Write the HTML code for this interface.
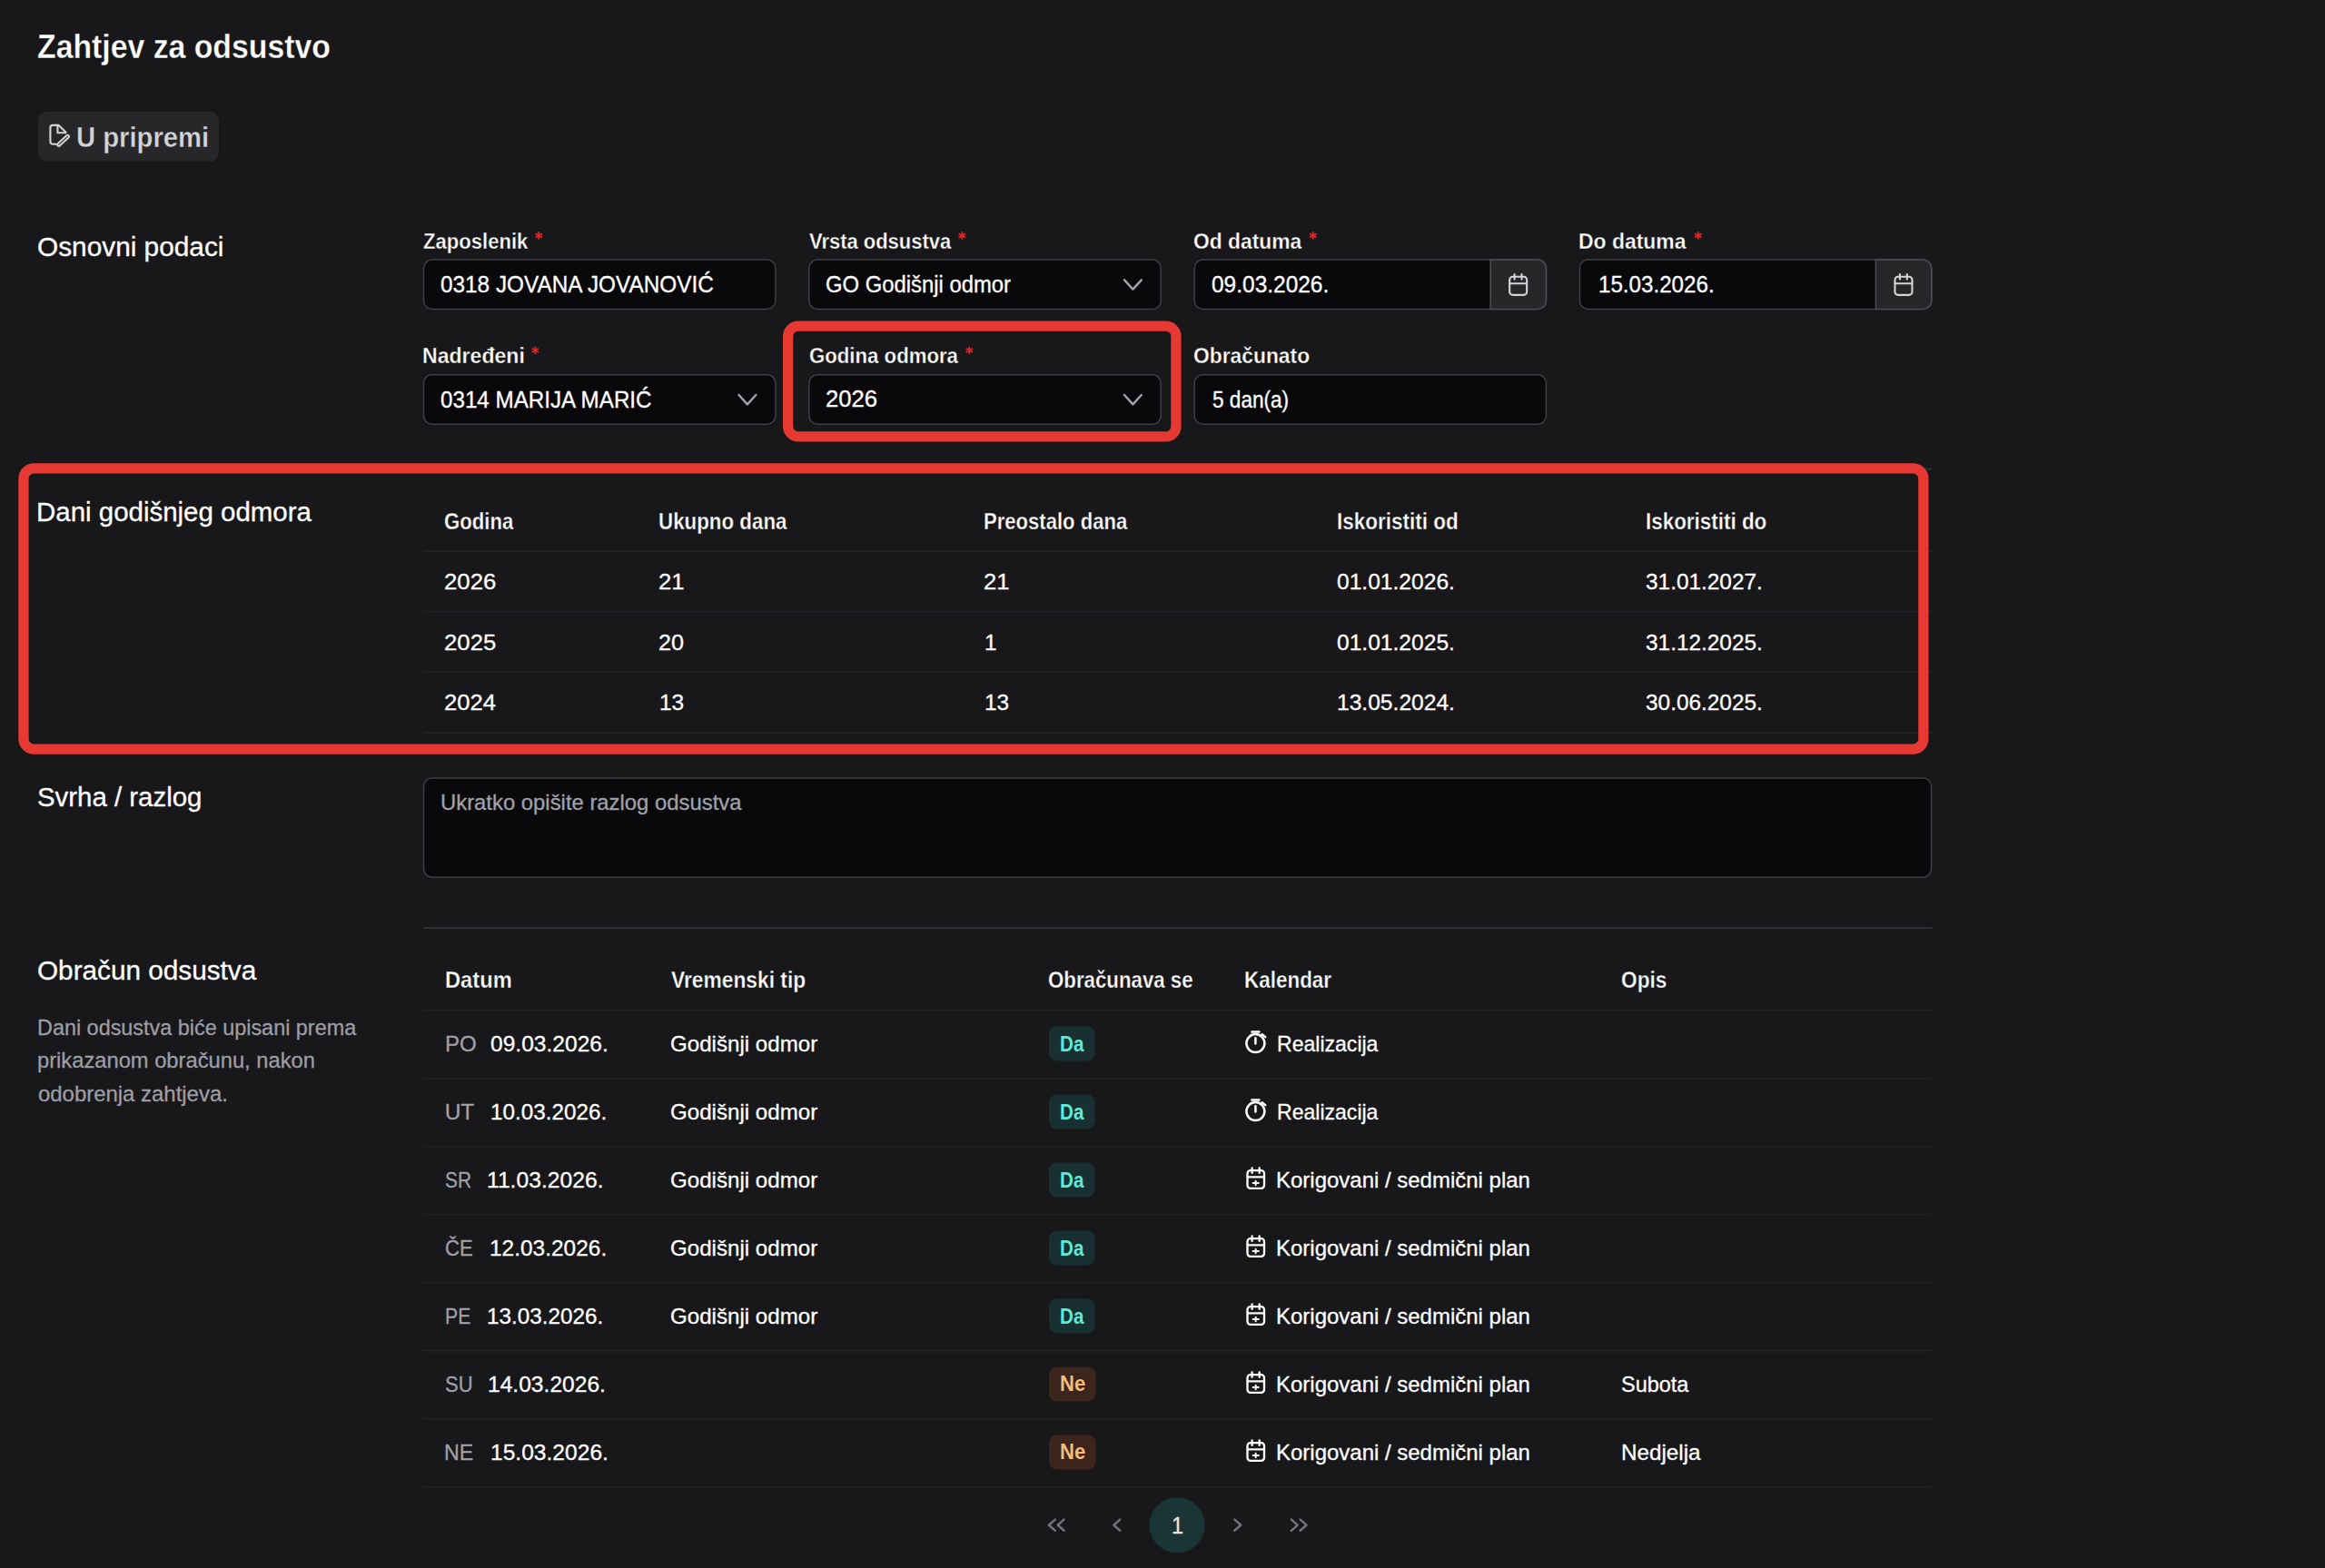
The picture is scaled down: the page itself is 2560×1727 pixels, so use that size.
<!DOCTYPE html>
<html lang="hr"><head><meta charset="utf-8"><title>Zahtjev za odsustvo</title>
<style>
html,body{margin:0;padding:0}
body{width:2560px;height:1727px;background:#18181b;overflow:hidden;position:relative;font-family:"Liberation Sans",sans-serif;color:#fff}
.shapes{position:absolute;left:0;top:0}
.t{position:absolute;white-space:nowrap;line-height:1;color:#fff;transform-origin:0 50%}
</style></head>
<body>
<svg class="shapes" width="2560" height="1727" viewBox="0 0 2560 1727"><rect x="466" y="515.50" width="1661.3" height="2" fill="#2e2e33"/>
<rect x="466" y="1021.00" width="1661.3" height="2" fill="#2e2e33"/>
<rect x="466" y="606.00" width="1661.3" height="2" fill="#222225"/>
<rect x="466" y="672.67" width="1661.3" height="2" fill="#222225"/>
<rect x="466" y="739.33" width="1661.3" height="2" fill="#222225"/>
<rect x="466" y="806.00" width="1661.3" height="2" fill="#222225"/>
<rect x="466" y="1111.60" width="1661.3" height="2" fill="#222225"/>
<rect x="466" y="1186.60" width="1661.3" height="2" fill="#222225"/>
<rect x="466" y="1261.60" width="1661.3" height="2" fill="#222225"/>
<rect x="466" y="1336.60" width="1661.3" height="2" fill="#222225"/>
<rect x="466" y="1411.60" width="1661.3" height="2" fill="#222225"/>
<rect x="466" y="1486.60" width="1661.3" height="2" fill="#222225"/>
<rect x="466" y="1561.60" width="1661.3" height="2" fill="#222225"/>
<rect x="466" y="1636.60" width="1661.3" height="2" fill="#222225"/>
<rect x="41.80" y="123.00" width="199.20" height="54.70" rx="10.00" fill="#27272a"/>
<g fill="none" stroke="#d4d4d8" stroke-width="2.1" stroke-linecap="round" stroke-linejoin="round"><path d="M61.8 158.8H58.4a3 3 0 0 1-3-3V140.9a3 3 0 0 1 3-3h6.2l7.7 7.7"/><path d="M63.4 138.6v7.6h9"/><rect x="-1.55" y="-1.55" width="16.3" height="3.1" rx="1.55" transform="translate(64.7,159.3) rotate(-42.4)"/></g>
<rect x="466.55" y="285.95" width="387.30" height="54.50" rx="9.25" fill="#09090b" stroke="#3f3f46" stroke-width="1.5"/>
<rect x="890.85" y="285.95" width="387.30" height="54.50" rx="9.25" fill="#09090b" stroke="#3f3f46" stroke-width="1.5"/>
<rect x="1315.15" y="285.95" width="387.30" height="54.50" rx="9.25" fill="#09090b" stroke="#3f3f46" stroke-width="1.5"/>
<rect x="1739.45" y="285.95" width="387.30" height="54.50" rx="9.25" fill="#09090b" stroke="#3f3f46" stroke-width="1.5"/>
<rect x="466.55" y="412.65" width="387.30" height="54.50" rx="9.25" fill="#09090b" stroke="#3f3f46" stroke-width="1.5"/>
<rect x="890.85" y="412.65" width="387.30" height="54.50" rx="9.25" fill="#09090b" stroke="#3f3f46" stroke-width="1.5"/>
<rect x="1315.15" y="412.65" width="387.30" height="54.50" rx="9.25" fill="#09090b" stroke="#3f3f46" stroke-width="1.5"/>
<path d="M1641.10 285.95H1693.20A9.25 9.25 0 0 1 1702.45 295.20V331.20A9.25 9.25 0 0 1 1693.20 340.45H1641.10Z" fill="#27272a" stroke="#4d4d56" stroke-width="1.5"/>
<g transform="translate(0.0,0)" fill="none" stroke="#d4d4d8" stroke-width="2.1" stroke-linecap="round" stroke-linejoin="round"><rect x="1662.15" y="304.75" width="19" height="20.1" rx="3.4"/><path d="M1667.6 302v5.6M1675.5 302v5.6M1662.3 312.2h18.7"/></g>
<path d="M2065.40 285.95H2117.50A9.25 9.25 0 0 1 2126.75 295.20V331.20A9.25 9.25 0 0 1 2117.50 340.45H2065.40Z" fill="#27272a" stroke="#4d4d56" stroke-width="1.5"/>
<g transform="translate(424.3,0)" fill="none" stroke="#d4d4d8" stroke-width="2.1" stroke-linecap="round" stroke-linejoin="round"><rect x="1662.15" y="304.75" width="19" height="20.1" rx="3.4"/><path d="M1667.6 302v5.6M1675.5 302v5.6M1662.3 312.2h18.7"/></g>
<path d="M1238.0 308.3l9.4 10.3 9.4-10.3" fill="none" stroke="#a1a1aa" stroke-width="2.5" stroke-linecap="round" stroke-linejoin="round"/>
<path d="M813.5 435.0l9.4 10.3 9.4-10.3" fill="none" stroke="#a1a1aa" stroke-width="2.5" stroke-linecap="round" stroke-linejoin="round"/>
<path d="M1238.0 435.0l9.4 10.3 9.4-10.3" fill="none" stroke="#a1a1aa" stroke-width="2.5" stroke-linecap="round" stroke-linejoin="round"/>
<rect x="466.55" y="857.05" width="1660.00" height="109.10" rx="9.25" fill="#09090b" stroke="#3f3f46" stroke-width="1.5"/>
<rect x="1155.00" y="1130.60" width="50.60" height="37.80" rx="8.50" fill="#183031"/>
<g transform="translate(1369,1134.0)" fill="none" stroke="#fff" stroke-width="2.5" stroke-linecap="round"><circle cx="13.4" cy="15.1" r="10"/><path d="M13.4 9.2v6.2M9.4 2.6h8M20.6 5.2l3.6 2.9"/></g>
<rect x="1155.00" y="1205.60" width="50.60" height="37.80" rx="8.50" fill="#183031"/>
<g transform="translate(1369,1209.0)" fill="none" stroke="#fff" stroke-width="2.5" stroke-linecap="round"><circle cx="13.4" cy="15.1" r="10"/><path d="M13.4 9.2v6.2M9.4 2.6h8M20.6 5.2l3.6 2.9"/></g>
<rect x="1155.00" y="1280.60" width="50.60" height="37.80" rx="8.50" fill="#183031"/>
<g transform="translate(0,1300.0)" fill="none" stroke="#fff" stroke-width="2.3" stroke-linecap="round" stroke-linejoin="round"><rect x="1373.5" y="-10.85" width="18.5" height="19.7" rx="3.3"/><path d="M1378.6 -13.7v5.6M1386.7 -13.7v5.6M1373.7 -3.7h18.1"/><path stroke-width="2" d="M1379.6 3h6.2M1382.65 0.65v4.7"/></g>
<rect x="1155.00" y="1355.60" width="50.60" height="37.80" rx="8.50" fill="#183031"/>
<g transform="translate(0,1375.0)" fill="none" stroke="#fff" stroke-width="2.3" stroke-linecap="round" stroke-linejoin="round"><rect x="1373.5" y="-10.85" width="18.5" height="19.7" rx="3.3"/><path d="M1378.6 -13.7v5.6M1386.7 -13.7v5.6M1373.7 -3.7h18.1"/><path stroke-width="2" d="M1379.6 3h6.2M1382.65 0.65v4.7"/></g>
<rect x="1155.00" y="1430.60" width="50.60" height="37.80" rx="8.50" fill="#183031"/>
<g transform="translate(0,1450.0)" fill="none" stroke="#fff" stroke-width="2.3" stroke-linecap="round" stroke-linejoin="round"><rect x="1373.5" y="-10.85" width="18.5" height="19.7" rx="3.3"/><path d="M1378.6 -13.7v5.6M1386.7 -13.7v5.6M1373.7 -3.7h18.1"/><path stroke-width="2" d="M1379.6 3h6.2M1382.65 0.65v4.7"/></g>
<rect x="1155.00" y="1505.60" width="51.50" height="37.80" rx="8.50" fill="#3c251b"/>
<g transform="translate(0,1525.0)" fill="none" stroke="#fff" stroke-width="2.3" stroke-linecap="round" stroke-linejoin="round"><rect x="1373.5" y="-10.85" width="18.5" height="19.7" rx="3.3"/><path d="M1378.6 -13.7v5.6M1386.7 -13.7v5.6M1373.7 -3.7h18.1"/><path stroke-width="2" d="M1379.6 3h6.2M1382.65 0.65v4.7"/></g>
<rect x="1155.00" y="1580.60" width="51.50" height="37.80" rx="8.50" fill="#3c251b"/>
<g transform="translate(0,1600.0)" fill="none" stroke="#fff" stroke-width="2.3" stroke-linecap="round" stroke-linejoin="round"><rect x="1373.5" y="-10.85" width="18.5" height="19.7" rx="3.3"/><path d="M1378.6 -13.7v5.6M1386.7 -13.7v5.6M1373.7 -3.7h18.1"/><path stroke-width="2" d="M1379.6 3h6.2M1382.65 0.65v4.7"/></g>
<circle cx="1296.1" cy="1679.7" r="30.5" fill="#1b3537"/>
<g transform="translate(1163.2,1679.7)" fill="none" stroke="#71717a" stroke-width="2.5" stroke-linecap="round" stroke-linejoin="round"><path transform="translate(-4.9)" d="M3.45 -6.1L-3.45 0l6.9 6.1"/><path transform="translate(4.9)" d="M3.45 -6.1L-3.45 0l6.9 6.1"/></g>
<g transform="translate(1229.8,1679.7)" fill="none" stroke="#71717a" stroke-width="2.5" stroke-linecap="round" stroke-linejoin="round"><path d="M3.45 -6.1L-3.45 0l6.9 6.1"/></g>
<g transform="translate(1362.8,1679.7)" fill="none" stroke="#71717a" stroke-width="2.5" stroke-linecap="round" stroke-linejoin="round"><path d="M-3.45 -6.1L3.45 0l-6.9 6.1"/></g>
<g transform="translate(1430.2,1679.7)" fill="none" stroke="#71717a" stroke-width="2.5" stroke-linecap="round" stroke-linejoin="round"><path transform="translate(-4.9)" d="M-3.45 -6.1L3.45 0l-6.9 6.1"/><path transform="translate(4.9)" d="M-3.45 -6.1L3.45 0l-6.9 6.1"/></g>
<path transform="translate(593.3,259.5)" d="M0 -4.2V4.2M-3.7 -2.1L3.7 2.1M-3.7 2.1L3.7 -2.1" stroke="#dc2626" stroke-width="1.8" fill="none"/>
<path transform="translate(1059.3,259.5)" d="M0 -4.2V4.2M-3.7 -2.1L3.7 2.1M-3.7 2.1L3.7 -2.1" stroke="#dc2626" stroke-width="1.8" fill="none"/>
<path transform="translate(1445.7,259.5)" d="M0 -4.2V4.2M-3.7 -2.1L3.7 2.1M-3.7 2.1L3.7 -2.1" stroke="#dc2626" stroke-width="1.8" fill="none"/>
<path transform="translate(1869.7,259.5)" d="M0 -4.2V4.2M-3.7 -2.1L3.7 2.1M-3.7 2.1L3.7 -2.1" stroke="#dc2626" stroke-width="1.8" fill="none"/>
<path transform="translate(589.3,385.9)" d="M0 -4.2V4.2M-3.7 -2.1L3.7 2.1M-3.7 2.1L3.7 -2.1" stroke="#dc2626" stroke-width="1.8" fill="none"/>
<path transform="translate(1067.3,385.9)" d="M0 -4.2V4.2M-3.7 -2.1L3.7 2.1M-3.7 2.1L3.7 -2.1" stroke="#dc2626" stroke-width="1.8" fill="none"/>
<rect x="867.65" y="359.05" width="427.30" height="121.90" rx="11.35" fill="none" stroke="#e53931" stroke-width="11.3"/>
<rect x="25.95" y="515.95" width="2091.90" height="309.10" rx="11.35" fill="none" stroke="#e53931" stroke-width="11.3"/></svg>
<span class="t" id="title" style="left:41.02px;top:33.54px;font-size:36.5px;font-weight:700;-webkit-text-stroke:.35px #18181b;transform:scaleX(0.9255);">Zahtjev za odsustvo</span>
<span class="t" id="badge" style="left:83.70px;top:135.77px;font-size:31.5px;font-weight:700;-webkit-text-stroke:.35px #27272a;color:#d4d4d8;transform:scaleX(0.9280);">U pripremi</span>
<span class="t" id="s1" style="left:41.02px;top:257.37px;font-size:29.8px;-webkit-text-stroke:.3px;">Osnovni podaci</span>
<span class="t" id="s2" style="left:40.21px;top:549.27px;font-size:29.8px;-webkit-text-stroke:.3px;transform:scaleX(0.9886);">Dani godišnjeg odmora</span>
<span class="t" id="s3" style="left:41.07px;top:863.20px;font-size:29.8px;-webkit-text-stroke:.3px;transform:scaleX(0.9866);">Svrha / razlog</span>
<span class="t" id="s4" style="left:41.21px;top:1054.27px;font-size:29.8px;-webkit-text-stroke:.3px;transform:scaleX(0.9976);">Obračun odsustva</span>
<span class="t" id="d1" style="left:41.00px;top:1119.69px;font-size:24.5px;-webkit-text-stroke:.3px;color:#9e9ea5;transform:scaleX(0.9550);">Dani odsustva biće upisani prema</span>
<span class="t" id="d2" style="left:41.00px;top:1155.66px;font-size:24.5px;-webkit-text-stroke:.3px;color:#9e9ea5;transform:scaleX(0.9680);">prikazanom obračunu, nakon</span>
<span class="t" id="d3" style="left:41.75px;top:1192.80px;font-size:24.5px;-webkit-text-stroke:.3px;color:#9e9ea5;transform:scaleX(0.9766);">odobrenja zahtjeva.</span>
<span class="t" id="l1" style="left:465.85px;top:253.70px;font-size:24.5px;font-weight:700;-webkit-text-stroke:.35px #18181b;transform:scaleX(0.9016);">Zaposlenik</span>
<span class="t" id="l2" style="left:891.05px;top:253.70px;font-size:24.5px;font-weight:700;-webkit-text-stroke:.35px #18181b;transform:scaleX(0.8960);">Vrsta odsustva</span>
<span class="t" id="l3" style="left:1313.96px;top:253.70px;font-size:24.5px;font-weight:700;-webkit-text-stroke:.35px #18181b;transform:scaleX(0.9317);">Od datuma</span>
<span class="t" id="l4" style="left:1738.37px;top:253.70px;font-size:24.5px;font-weight:700;-webkit-text-stroke:.35px #18181b;transform:scaleX(0.9357);">Do datuma</span>
<span class="t" id="l5" style="left:465.34px;top:380.28px;font-size:24.5px;font-weight:700;-webkit-text-stroke:.35px #18181b;transform:scaleX(0.9414);">Nadređeni</span>
<span class="t" id="l6" style="left:890.61px;top:380.28px;font-size:24.5px;font-weight:700;-webkit-text-stroke:.35px #18181b;transform:scaleX(0.9055);">Godina odmora</span>
<span class="t" id="l7" style="left:1313.96px;top:380.28px;font-size:24.5px;font-weight:700;-webkit-text-stroke:.35px #18181b;transform:scaleX(0.9318);">Obračunato</span>
<span class="t" id="i1" style="left:484.96px;top:300.83px;font-size:25px;-webkit-text-stroke:.3px;transform:scaleX(0.9737);">0318 JOVANA JOVANOVIĆ</span>
<span class="t" id="i2" style="left:909.16px;top:300.83px;font-size:25px;-webkit-text-stroke:.3px;transform:scaleX(0.9531);">GO Godišnji odmor</span>
<span class="t" id="i3" style="left:1333.92px;top:300.83px;font-size:25px;-webkit-text-stroke:.3px;transform:scaleX(0.9789);">09.03.2026.</span>
<span class="t" id="i4" style="left:1759.50px;top:300.83px;font-size:25px;-webkit-text-stroke:.3px;transform:scaleX(0.9661);">15.03.2026.</span>
<span class="t" id="i5" style="left:484.96px;top:427.57px;font-size:25px;-webkit-text-stroke:.3px;transform:scaleX(0.9675);">0314 MARIJA MARIĆ</span>
<span class="t" id="i6" style="left:908.86px;top:427.16px;font-size:25px;-webkit-text-stroke:.3px;transform:scaleX(1.0266);">2026</span>
<span class="t" id="i7" style="left:1334.68px;top:427.76px;font-size:25px;-webkit-text-stroke:.3px;transform:scaleX(0.9031);">5 dan(a)</span>
<span class="t" id="ph" style="left:484.90px;top:872.16px;font-size:24.5px;-webkit-text-stroke:.3px;color:#a1a1aa;transform:scaleX(0.9737);">Ukratko opišite razlog odsustva</span>
<span class="t" id="h1" style="left:489.03px;top:561.95px;font-size:25.5px;font-weight:700;-webkit-text-stroke:.35px #18181b;transform:scaleX(0.8693);">Godina</span>
<span class="t" id="h2" style="left:725.04px;top:561.95px;font-size:25.5px;font-weight:700;-webkit-text-stroke:.35px #18181b;transform:scaleX(0.8758);">Ukupno dana</span>
<span class="t" id="h3" style="left:1083.17px;top:561.95px;font-size:25.5px;font-weight:700;-webkit-text-stroke:.35px #18181b;transform:scaleX(0.8656);">Preostalo dana</span>
<span class="t" id="h4" style="left:1471.97px;top:561.95px;font-size:25.5px;font-weight:700;-webkit-text-stroke:.35px #18181b;transform:scaleX(0.8820);">Iskoristiti od</span>
<span class="t" id="h5" style="left:1811.97px;top:561.95px;font-size:25.5px;font-weight:700;-webkit-text-stroke:.35px #18181b;transform:scaleX(0.8794);">Iskoristiti do</span>
<span class="t" id="a01" style="left:489.29px;top:628.56px;font-size:24.5px;-webkit-text-stroke:.3px;transform:scaleX(1.0514);">2026</span>
<span class="t" id="a02" style="left:725.49px;top:628.56px;font-size:24.5px;-webkit-text-stroke:.3px;transform:scaleX(1.0510);">21</span>
<span class="t" id="a03" style="left:1083.29px;top:628.56px;font-size:24.5px;-webkit-text-stroke:.3px;transform:scaleX(1.0437);">21</span>
<span class="t" id="a04" style="left:1471.97px;top:628.56px;font-size:24.5px;-webkit-text-stroke:.3px;transform:scaleX(1.0037);">01.01.2026.</span>
<span class="t" id="a05" style="left:1812.28px;top:628.56px;font-size:24.5px;-webkit-text-stroke:.3px;transform:scaleX(0.9954);">31.01.2027.</span>
<span class="t" id="a11" style="left:489.29px;top:695.63px;font-size:24.5px;-webkit-text-stroke:.3px;transform:scaleX(1.0510);">2025</span>
<span class="t" id="a12" style="left:725.49px;top:695.63px;font-size:24.5px;-webkit-text-stroke:.3px;transform:scaleX(1.0283);">20</span>
<span class="t" id="a13" style="left:1083.89px;top:695.63px;font-size:24.5px;-webkit-text-stroke:.3px;transform:scaleX(0.9910);">1</span>
<span class="t" id="a14" style="left:1471.97px;top:695.68px;font-size:24.5px;-webkit-text-stroke:.3px;transform:scaleX(1.0037);">01.01.2025.</span>
<span class="t" id="a15" style="left:1812.28px;top:695.64px;font-size:24.5px;-webkit-text-stroke:.3px;transform:scaleX(0.9954);">31.12.2025.</span>
<span class="t" id="a21" style="left:489.29px;top:761.90px;font-size:24.5px;-webkit-text-stroke:.3px;transform:scaleX(1.0472);">2024</span>
<span class="t" id="a22" style="left:725.51px;top:761.90px;font-size:24.5px;-webkit-text-stroke:.3px;transform:scaleX(0.9991);">13</span>
<span class="t" id="a23" style="left:1083.91px;top:761.90px;font-size:24.5px;-webkit-text-stroke:.3px;transform:scaleX(0.9952);">13</span>
<span class="t" id="a24" style="left:1472.16px;top:761.90px;font-size:24.5px;-webkit-text-stroke:.3px;transform:scaleX(1.0038);">13.05.2024.</span>
<span class="t" id="a25" style="left:1812.28px;top:761.90px;font-size:24.5px;-webkit-text-stroke:.3px;transform:scaleX(0.9954);">30.06.2025.</span>
<span class="t" id="g1" style="left:489.70px;top:1066.71px;font-size:25.5px;font-weight:700;-webkit-text-stroke:.35px #18181b;transform:scaleX(0.9297);">Datum</span>
<span class="t" id="g2" style="left:739.47px;top:1066.71px;font-size:25.5px;font-weight:700;-webkit-text-stroke:.35px #18181b;transform:scaleX(0.8934);">Vremenski tip</span>
<span class="t" id="g3" style="left:1154.03px;top:1066.71px;font-size:25.5px;font-weight:700;-webkit-text-stroke:.35px #18181b;transform:scaleX(0.8727);">Obračunava se</span>
<span class="t" id="g4" style="left:1370.14px;top:1066.71px;font-size:25.5px;font-weight:700;-webkit-text-stroke:.35px #18181b;transform:scaleX(0.8803);">Kalendar</span>
<span class="t" id="g5" style="left:1785.22px;top:1066.71px;font-size:25.5px;font-weight:700;-webkit-text-stroke:.35px #18181b;transform:scaleX(0.8889);">Opis</span>
<span class="t" id="b0a" style="left:489.61px;top:1137.56px;font-size:24.5px;-webkit-text-stroke:.3px;color:#a1a1aa;transform:scaleX(0.9807);">PO</span>
<span class="t" id="b0d" style="left:540.49px;top:1137.56px;font-size:24.5px;-webkit-text-stroke:.3px;transform:scaleX(1.0030);">09.03.2026.</span>
<span class="t" id="b0t" style="left:738.08px;top:1137.56px;font-size:24.5px;-webkit-text-stroke:.3px;transform:scaleX(0.9845);">Godišnji odmor</span>
<span class="t" id="b0y" style="left:1166.77px;top:1138.84px;font-size:23.5px;font-weight:700;color:#5eead4;transform:scaleX(0.8781);">Da</span>
<span class="t" id="b0k" style="left:1405.88px;top:1137.56px;font-size:24.5px;-webkit-text-stroke:.3px;transform:scaleX(0.9406);">Realizacija</span>
<span class="t" id="b1a" style="left:489.64px;top:1212.56px;font-size:24.5px;-webkit-text-stroke:.3px;color:#a1a1aa;">UT</span>
<span class="t" id="b1d" style="left:539.94px;top:1212.56px;font-size:24.5px;-webkit-text-stroke:.3px;transform:scaleX(0.9916);">10.03.2026.</span>
<span class="t" id="b1t" style="left:738.08px;top:1212.56px;font-size:24.5px;-webkit-text-stroke:.3px;transform:scaleX(0.9845);">Godišnji odmor</span>
<span class="t" id="b1y" style="left:1166.77px;top:1213.84px;font-size:23.5px;font-weight:700;color:#5eead4;transform:scaleX(0.8781);">Da</span>
<span class="t" id="b1k" style="left:1405.88px;top:1212.56px;font-size:24.5px;-webkit-text-stroke:.3px;transform:scaleX(0.9406);">Realizacija</span>
<span class="t" id="b2a" style="left:490.41px;top:1287.56px;font-size:24.5px;-webkit-text-stroke:.3px;color:#a1a1aa;transform:scaleX(0.8518);">SR</span>
<span class="t" id="b2d" style="left:535.69px;top:1287.56px;font-size:24.5px;-webkit-text-stroke:.3px;transform:scaleX(1.0072);">11.03.2026.</span>
<span class="t" id="b2t" style="left:738.08px;top:1287.56px;font-size:24.5px;-webkit-text-stroke:.3px;transform:scaleX(0.9845);">Godišnji odmor</span>
<span class="t" id="b2y" style="left:1166.77px;top:1288.84px;font-size:23.5px;font-weight:700;color:#5eead4;transform:scaleX(0.8781);">Da</span>
<span class="t" id="b2k" style="left:1405.22px;top:1287.56px;font-size:24.5px;-webkit-text-stroke:.3px;transform:scaleX(0.9787);">Korigovani / sedmični plan</span>
<span class="t" id="b3a" style="left:489.76px;top:1362.56px;font-size:24.5px;-webkit-text-stroke:.3px;color:#a1a1aa;transform:scaleX(0.9033);">ČE</span>
<span class="t" id="b3d" style="left:539.01px;top:1362.56px;font-size:24.5px;-webkit-text-stroke:.3px;transform:scaleX(0.9985);">12.03.2026.</span>
<span class="t" id="b3t" style="left:738.08px;top:1362.56px;font-size:24.5px;-webkit-text-stroke:.3px;transform:scaleX(0.9845);">Godišnji odmor</span>
<span class="t" id="b3y" style="left:1166.77px;top:1363.84px;font-size:23.5px;font-weight:700;color:#5eead4;transform:scaleX(0.8781);">Da</span>
<span class="t" id="b3k" style="left:1405.22px;top:1362.56px;font-size:24.5px;-webkit-text-stroke:.3px;transform:scaleX(0.9787);">Korigovani / sedmični plan</span>
<span class="t" id="b4a" style="left:489.53px;top:1437.56px;font-size:24.5px;-webkit-text-stroke:.3px;color:#a1a1aa;transform:scaleX(0.8646);">PE</span>
<span class="t" id="b4d" style="left:536.18px;top:1437.56px;font-size:24.5px;-webkit-text-stroke:.3px;transform:scaleX(0.9916);">13.03.2026.</span>
<span class="t" id="b4t" style="left:738.08px;top:1437.56px;font-size:24.5px;-webkit-text-stroke:.3px;transform:scaleX(0.9845);">Godišnji odmor</span>
<span class="t" id="b4y" style="left:1166.77px;top:1438.84px;font-size:23.5px;font-weight:700;color:#5eead4;transform:scaleX(0.8781);">Da</span>
<span class="t" id="b4k" style="left:1405.22px;top:1437.56px;font-size:24.5px;-webkit-text-stroke:.3px;transform:scaleX(0.9787);">Korigovani / sedmični plan</span>
<span class="t" id="b5a" style="left:490.32px;top:1512.56px;font-size:24.5px;-webkit-text-stroke:.3px;color:#a1a1aa;transform:scaleX(0.8997);">SU</span>
<span class="t" id="b5d" style="left:537.31px;top:1512.56px;font-size:24.5px;-webkit-text-stroke:.3px;transform:scaleX(1.0038);">14.03.2026.</span>
<span class="t" id="b5y" style="left:1166.76px;top:1513.08px;font-size:23.5px;font-weight:700;color:#fdba74;transform:scaleX(0.9367);">Ne</span>
<span class="t" id="b5k" style="left:1405.22px;top:1512.56px;font-size:24.5px;-webkit-text-stroke:.3px;transform:scaleX(0.9787);">Korigovani / sedmični plan</span>
<span class="t" id="b6a" style="left:489.47px;top:1587.56px;font-size:24.5px;-webkit-text-stroke:.3px;color:#a1a1aa;transform:scaleX(0.9482);">NE</span>
<span class="t" id="b6d" style="left:539.91px;top:1587.56px;font-size:24.5px;-webkit-text-stroke:.3px;transform:scaleX(1.0035);">15.03.2026.</span>
<span class="t" id="b6y" style="left:1166.76px;top:1588.08px;font-size:23.5px;font-weight:700;color:#fdba74;transform:scaleX(0.9367);">Ne</span>
<span class="t" id="b6k" style="left:1405.22px;top:1587.56px;font-size:24.5px;-webkit-text-stroke:.3px;transform:scaleX(0.9787);">Korigovani / sedmični plan</span>
<span class="t" id="b5o" style="left:1785.33px;top:1512.56px;font-size:24.5px;-webkit-text-stroke:.3px;transform:scaleX(0.9584);">Subota</span>
<span class="t" id="b6o" style="left:1784.81px;top:1587.56px;font-size:24.5px;-webkit-text-stroke:.3px;transform:scaleX(0.9888);">Nedjelja</span>
<span class="t" id="pg" style="left:1290.43px;top:1667.72px;font-size:25.5px;-webkit-text-stroke:.3px;color:#e4e4e7;transform:scaleX(0.9207);">1</span>
</body></html>
